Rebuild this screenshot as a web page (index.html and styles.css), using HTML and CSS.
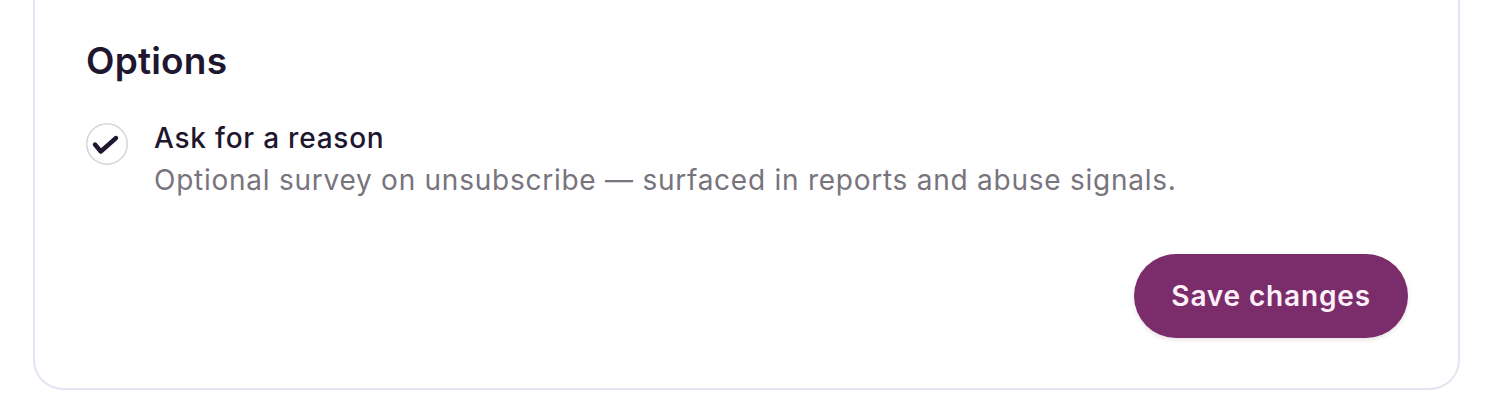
FILE: index.html
```html
<!DOCTYPE html>
<html lang="en">
<head>
<meta charset="utf-8">
<title>Options</title>
<link rel="stylesheet" href="styles.css">
</head>
<body>
  <section class="card">
    <h2 class="card-title">Options</h2>
    <div class="option">
      <span class="check">
        <svg viewBox="0 0 42 42" width="42" height="42" aria-hidden="true">
          <circle cx="21" cy="21" r="20.25" fill="#fff" stroke="#d7d4da" stroke-width="1.5"/>
          <path d="M9 21.5 L14.8 28.5 L30 15" fill="none" stroke="#1f1630" stroke-width="4.4" stroke-linecap="round" stroke-linejoin="round"/>
        </svg>
      </span>
      <div class="option-text">
        <div class="option-title">Ask for a reason</div>
        <div class="option-desc">Optional survey on unsubscribe — surfaced in reports and abuse signals.</div>
      </div>
    </div>
    <div class="actions">
      <button class="btn-primary" type="button">Save changes</button>
    </div>
  </section>
</body>
</html>
```

FILE: styles.css
```css
html, body {
  margin: 0;
  padding: 0;
  background: #ffffff;
}

body {
  font-family: Inter, "Noto Sans", "Liberation Sans", sans-serif;
  color: #1f1630;
}

.card {
  margin: 0 32px 0 33px;
  border: 2px solid #e6e4f3;
  border-top: none;
  border-radius: 0 0 30px 30px;
  padding: 39px 50px 50px 51px;
  background: #fff;
  height: 390px;
  box-sizing: border-box;
  display: flex;
  flex-direction: column;
}

.card-title {
  margin: 0;
  font-size: 37px;
  line-height: 1.2;
  font-weight: 600;
  letter-spacing: 0.2px;
  color: #1f1630;
}

.option {
  display: flex;
  align-items: flex-start;
  gap: 26px;
  margin-top: 35px;
}

.check {
  display: block;
  width: 42px;
  height: 42px;
  margin-top: 5px;
  flex: none;
}

.check svg {
  display: block;
}

.option-title {
  font-size: 28px;
  line-height: 40px;
  font-weight: 500;
  letter-spacing: 0.77px;
  color: #1f1630;
}

.option-desc {
  margin-top: 2px;
  font-size: 28px;
  line-height: 40px;
  font-weight: 400;
  letter-spacing: 0.75px;
  color: #78747e;
}

.actions {
  display: flex;
  justify-content: flex-end;
  margin-top: auto;
}

.btn-primary {
  font-family: inherit;
  font-size: 28px;
  font-weight: 600;
  letter-spacing: 0.85px;
  color: #fdf0f9;
  background: #7a2d6a;
  border: none;
  border-radius: 42px;
  height: 84px;
  padding: 0 37px;
  box-shadow: 0 2px 4px rgba(60, 20, 50, 0.12);
  cursor: pointer;
}
```
